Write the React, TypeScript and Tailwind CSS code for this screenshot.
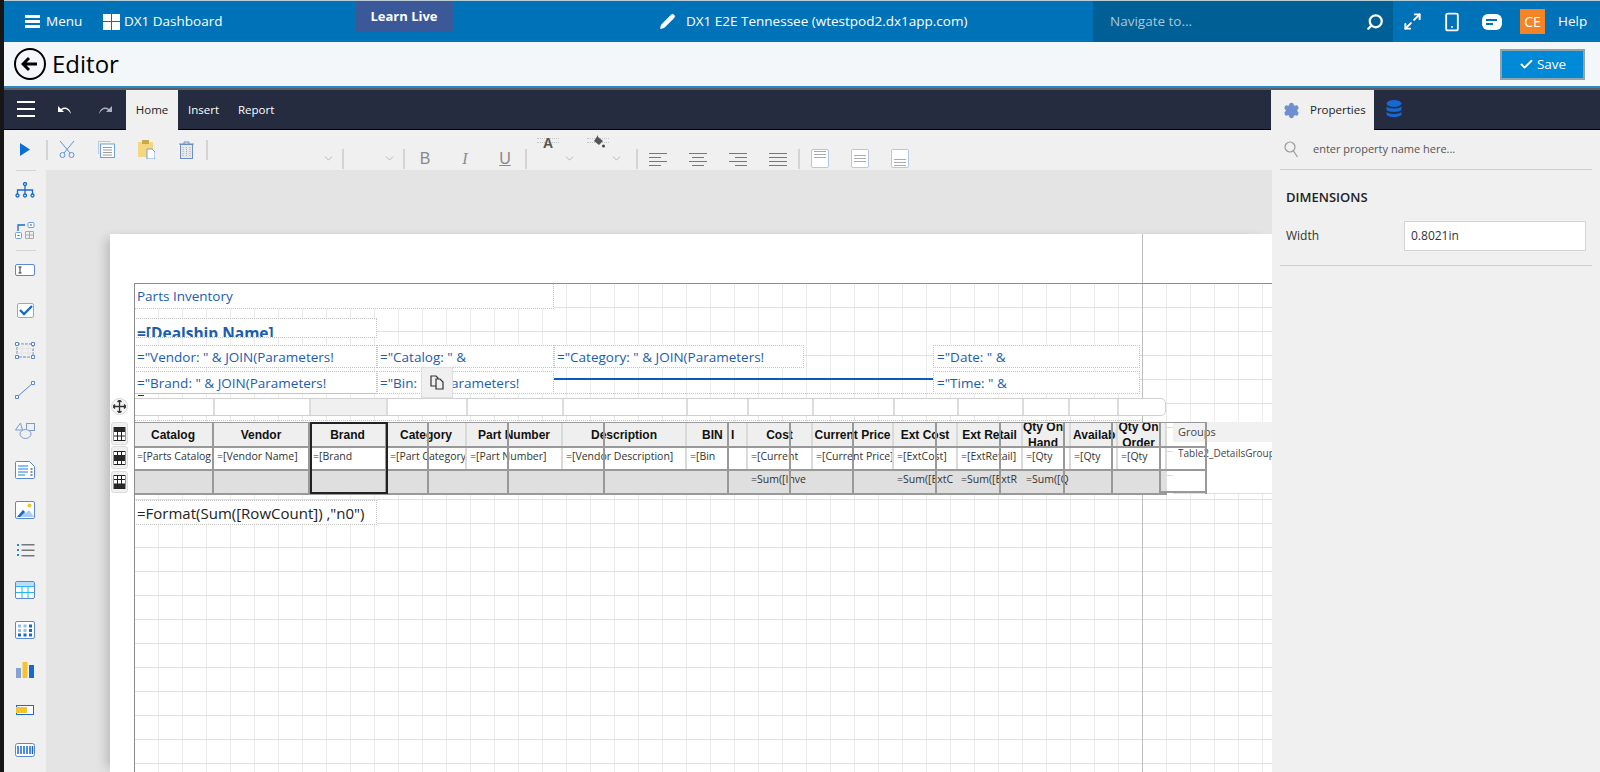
import { Check, Maximize2, Search, Settings, Smartphone, Pencil, ChevronDown } from "lucide-react";

const tableCols = "grid-cols-[80px_96px_77px_80px_96px_124px_42px_19px_65px_81px_64px_65px_42px_6px_47px_43px_6px]";
const lineCols = "grid-cols-[80px_96px_77px_42px_80px_96px_124px_62px_63px_83px_64px_64px_48px_48px]";

const headers: [string, string?][] = [
  ["Catalog"], ["Vendor"], ["Brand"], ["Category"], ["Part Number"], ["Description"], ["BIN"], ["I"], ["Cost"],
  ["Current Price"], ["Ext Cost"], ["Ext Retail"], ["Qty On", "Hand"], [""], ["Available"], ["Qty On", "Order"], [""],
];

const details: string[][] = [
  ["=[Parts Catalog", "Name]"], ["=[Vendor Name]"], ["=[Brand", "Name]"], ["=[Part Category", "Name]"], ["=[Part Number]"],
  ["=[Vendor Description]"], ["=[Bin", "Location]"], ["\u00a0", "=["], ["=[Current", "Price]"], ["=[Current Price]"],
  ["=[ExtCost]"], ["=[ExtRetail]"], ["=[Qty", "On"], [""], ["=[Qty", "Available"], ["=[Qty", "On"], [""],
];

const footers: string[][] = [
  [""], [""], [""], [""], [""], [""], [""], [""], ["=Sum([Inve"], [""], ["=Sum([ExtC"],
  ["=Sum([ExtR"], ["=Sum([Q"], [""], [""], [""], [""],
];

function HeaderBar() {
  return (
    <div className="flex h-[42px] shrink-0 items-center whitespace-nowrap border-t border-[#b9cdd9] bg-[#0072b8] text-[13.5px] text-white">
      <div className="ml-[21px] flex h-[13px] w-[15px] shrink-0 flex-col justify-between">
        <div className="h-[3px] bg-white" />
        <div className="h-[3px] bg-white" />
        <div className="h-[3px] bg-white" />
      </div>
      <span className="ml-[6px] w-[36px] shrink-0">Menu</span>
      <div className="ml-[21px] grid h-[16px] w-[17px] shrink-0 grid-cols-2 gap-[1px]">
        <div className="bg-white" />
        <div className="bg-white" />
        <div className="bg-white" />
        <div className="bg-white" />
      </div>
      <span className="ml-[4px] w-[96px] shrink-0">DX1 Dashboard</span>
      <div className="ml-[135px] flex h-[31px] w-[98px] shrink-0 -translate-y-[5px] items-center justify-center rounded-b-[3px] bg-[#3b5998] text-[13px] font-bold">
        Learn Live
      </div>
      <Pencil size={17} fill="white" strokeWidth={1} className="ml-[206px] shrink-0 -scale-x-100 rotate-90" />
      <span className="ml-[10px] w-[273px] shrink-0">DX1 E2E Tennessee (wtestpod2.dx1app.com)</span>
      <div className="ml-[134px] flex h-full w-[300px] shrink-0 items-center justify-between bg-[#005f94] pl-[17px] pr-[9px] text-[#a9c8dc]">
        <span>Navigate to...</span>
        <Search size={18} strokeWidth={3} className="-scale-x-100 text-white" />
      </div>
      <Maximize2 size={19} strokeWidth={2.5} className="ml-[10px] shrink-0" />
      <Smartphone size={20} strokeWidth={2.2} className="ml-[20px] shrink-0" />
      <div className="ml-[20px] flex h-[16px] w-[20px] shrink-0 flex-col justify-center gap-[2px] rounded-[6px] bg-white pl-[4px]">
        <div className="h-[2px] w-[11px] bg-[#0072b8]" />
        <div className="h-[2px] w-[7px] bg-[#0072b8]" />
      </div>
      <div className="ml-[18px] flex h-[25px] w-[25px] shrink-0 items-center justify-center bg-[#f58426] text-[14px]">CE</div>
      <span className="ml-[13px]">Help</span>
    </div>
  );
}

function EditorBar() {
  return (
    <div className="flex h-[46px] shrink-0 items-center border-b-[2px] border-[#2a8ac4] bg-[#f3f7fa]">
      <div className="ml-[10px] flex h-[32px] w-[32px] items-center justify-center rounded-full border-[2px] border-black">
        <svg width="18" height="16" viewBox="0 0 18 16">
          <path d="M8 2 2 8l6 6M2 8h14" fill="none" stroke="#000" strokeWidth="3" />
        </svg>
      </div>
      <span className="ml-[6px] text-[24px] leading-none text-black">Editor</span>
      <button className="ml-auto mr-[15px] flex h-[31px] w-[85px] items-center justify-center gap-[3px] border-[2px] border-[#8fa3ae] bg-[#0089d6] text-[13.5px] text-white">
        <Check size={15} strokeWidth={3} />
        Save
      </button>
    </div>
  );
}

function TabBar() {
  return (
    <div className="flex h-[42px] shrink-0 items-stretch border-b border-t-[2px] border-b-black border-t-[#5b5f66] bg-[#252c40] text-[11.5px] text-white">
      <div className="ml-[13px] mt-[11px] flex h-[16px] w-[18px] flex-col justify-between">
        <div className="h-[2px] bg-white" />
        <div className="h-[2px] bg-white" />
        <div className="h-[2px] bg-white" />
      </div>
      <svg width="16" height="10" viewBox="0 0 16 10" className="ml-[22px] mt-[15px]">
        <path d="M1 1v6h6L5 5c3-2 6-1 9 4-1-6-6-8-10-5z" fill="#fff" />
      </svg>
      <svg width="16" height="10" viewBox="0 0 16 10" className="ml-[24px] mt-[15px]">
        <path d="M15 1v6H9l2-2C8 3 5 4 2 9c1-6 6-8 10-5z" fill="#aeb2bc" />
      </svg>
      <div className="ml-[13px] -mb-[1px] flex w-[52px] items-center justify-center bg-[#f0f0f0] text-[#222]">Home</div>
      <span className="ml-[10px] flex w-[30px] items-center">Insert</span>
      <span className="ml-[20px] flex items-center">Report</span>
      <div className="ml-auto -mb-[1px] flex w-[103px] items-center bg-[#f0f0f0] text-[#222]">
        <Settings size={17} fill="#6f8fd0" stroke="#6f8fd0" className="ml-[12px]" />
        <span className="ml-[10px]">Properties</span>
      </div>
      <svg width="16" height="18" viewBox="0 0 16 18" className="ml-[12px] mr-[198px] mt-[10px]">
        <ellipse cx="8" cy="3.5" rx="7.5" ry="3.5" fill="#1769d2" />
        <path d="M.5 6.5c2 2.5 13 2.5 15 0v3.5c-2 2.500-13 2.500-15 0zM.5 12c2 2.500 13 2.500 15 0v2.500c-2 3.500-13 3.500-15 0z" fill="#1769d2" />
      </svg>
    </div>
  );
}

function Sep() {
  return <div className="mt-[10px] h-[20px] w-[2px] shrink-0 bg-[#d4d4d4]" />;
}

function LowSep() {
  return <div className="mt-[19px] h-[20px] w-[2px] shrink-0 bg-[#d4d4d4]" />;
}

function Lines({ kind }: { kind: string }) {
  const w = kind === "justify" ? ["w-[18px]", "w-[18px]", "w-[18px]", "w-[18px]"] : ["w-[18px]", "w-[12px]", "w-[18px]", "w-[12px]"];
  const align = kind === "left" ? "items-start" : kind === "right" ? "items-end" : "items-center";
  return (
    <div className="mt-[19px] flex h-[20px] w-10 shrink-0 items-center justify-center">
      <div className={`flex w-[18px] flex-col gap-[3px] ${align}`}>
        {w.map((c, i) => (
          <div key={i} className={`h-[1px] bg-[#777] ${c}`} />
        ))}
      </div>
    </div>
  );
}

function PageLayout({ pos }: { pos: string }) {
  return (
    <div className="mt-[19px] flex h-[20px] w-10 shrink-0 justify-center">
      <div className={`flex h-[19px] w-[18px] flex-col gap-[2px] rounded-[2px] border-[1.5px] border-[#b7c6e4] bg-white px-[2px] py-[1px] ${pos}`}>
        <div className="h-[1px] bg-[#aaa]" />
        <div className="h-[1px] bg-[#aaa]" />
        <div className="h-[1px] bg-[#aaa]" />
      </div>
    </div>
  );
}

function Toolbar() {
  return (
    <div className="flex h-[40px] shrink-0 bg-[#f0f0f0] text-[#8a8a8a]">
      <div className="flex h-10 w-[42px] shrink-0 items-center justify-center">
        <svg width="10" height="13" viewBox="0 0 10 13" className="-mt-[1px]">
          <path d="M0 0l10 6.500L0 13z" fill="#0a6fd8" />
        </svg>
      </div>
      <Sep />
      <div className="flex h-10 w-[38px] shrink-0 items-center justify-center">
        <svg width="16" height="17" viewBox="0 0 16 17" fill="none" stroke="#5b94d8" className="-mt-[1px]">
          <path d="M1 0l10 12M15 0 5 12" />
          <circle cx="3.500" cy="14" r="2.500" />
          <circle cx="12.500" cy="14" r="2.500" />
        </svg>
      </div>
      <div className="flex h-10 w-10 shrink-0 items-center justify-center">
        <svg width="17" height="17" viewBox="0 0 17 17" fill="none" className="-mt-[1px]">
          <path d="M.5 13V.5h12" stroke="#b3c8e6" />
          <rect x="2.500" y="3" width="14" height="13.500" fill="#fff" stroke="#6f9fdc" />
          <path d="M5 6.500h9M5 9h9M5 11.500h9M5 14h9" stroke="#999" />
        </svg>
      </div>
      <div className="flex h-10 w-10 shrink-0 items-center justify-center">
        <svg width="17" height="19" viewBox="0 0 17 19" className="-mt-[1px]">
          <rect x="0" y="2" width="15" height="15" fill="#f5d77f" />
          <rect x="4" y="0" width="7" height="4" fill="#c8a94a" />
          <path d="M9 9h5l3 3v7H9z" fill="#fff" stroke="#6f9fdc" />
        </svg>
      </div>
      <div className="flex h-10 w-10 shrink-0 items-center justify-center">
        <svg width="15" height="18" viewBox="0 0 15 18" fill="none" stroke="#6f8fc0" className="-mt-[1px]">
          <path d="M0 3h15M5 3V1h5v2" />
          <rect x="1.500" y="3.500" width="12" height="14" fill="#e8e8e8" />
          <path d="M4 6v9M7.500 6v9M11 6v9" stroke="#aaa" strokeDasharray="1 1" />
        </svg>
      </div>
      <Sep />
      <div className="flex h-10 w-[134px] shrink-0 items-end justify-end pb-[5px] pr-[7px]">
        <ChevronDown size={13} strokeWidth={1} />
      </div>
      <LowSep />
      <div className="flex h-10 w-[59px] shrink-0 items-end justify-end pb-[5px] pr-[7px]">
        <ChevronDown size={13} strokeWidth={1} />
      </div>
      <LowSep />
      <div className="mt-[19px] flex h-[20px] w-10 shrink-0 items-center justify-center text-[16px] leading-none [font-family:'Liberation_Sans',sans-serif]">B</div>
      <div className="mt-[19px] flex h-[20px] w-10 shrink-0 items-center justify-center text-[16px] italic leading-none [font-family:'Liberation_Serif',serif]">I</div>
      <div className="mt-[19px] flex h-[20px] w-10 shrink-0 items-center justify-center text-[16px] leading-none underline [font-family:'Liberation_Sans',sans-serif]">U</div>
      <LowSep />
      <div className="flex w-[109px] shrink-0">
        <div className="relative ml-[10px] mt-[5px] h-[16px] w-[22px]">
          <div className="absolute left-0 top-[3px] h-[5px] w-[22px] border-y border-dotted border-[#c4c4c4]" />
          <span className="absolute left-[6px] top-0 text-[14px] font-bold leading-[16px] text-[#555] [font-family:'Liberation_Sans',sans-serif]">A</span>
        </div>
        <ChevronDown size={13} strokeWidth={1} className="ml-[4px] mt-[22px]" />
        <div className="relative ml-[11px] mt-[5px] h-[16px] w-[22px]">
          <div className="absolute left-0 top-[3px] h-[5px] w-[22px] border-y border-dotted border-[#c4c4c4]" />
          <svg width="14" height="14" viewBox="0 0 14 14" className="absolute left-[5px] top-0">
            <path d="M6 0v2l5 4-4 4-5-4z" fill="#555" />
            <circle cx="11.500" cy="11" r="1.500" fill="#444" />
          </svg>
        </div>
        <ChevronDown size={13} strokeWidth={1} className="ml-[1px] mt-[22px]" />
      </div>
      <LowSep />
      <Lines kind="left" />
      <Lines kind="center" />
      <Lines kind="right" />
      <Lines kind="justify" />
      <LowSep />
      <PageLayout pos="justify-start" />
      <PageLayout pos="justify-center" />
      <PageLayout pos="justify-end" />
    </div>
  );
}

const sideIcons = [
  <svg key="a" width="20" height="16" viewBox="0 0 20 16" fill="none" stroke="#1769d2" strokeWidth="1.300">
    <circle cx="10" cy="2" r="1.500" /><circle cx="2.500" cy="13.500" r="1.500" /><circle cx="10" cy="13.500" r="1.500" /><circle cx="17.500" cy="13.500" r="1.500" />
    <path d="M10 3.500V12M2.500 12V8h15v4" />
  </svg>,
  <svg key="b" width="20" height="17" viewBox="0 0 20 17" fill="none">
    <rect x="13" y="0.500" width="6" height="5" rx="1" stroke="#6f9fdc" fill="#fff" /><rect x="15" y="2.500" width="2" height="1" fill="#1769d2" />
    <rect x="0.500" y="10.500" width="6" height="6" rx="1" stroke="#6f9fdc" fill="#fff" /><rect x="2.500" y="13" width="2" height="1" fill="#1769d2" />
    <path d="M3 9V3h7" stroke="#1769d2" strokeWidth="1.300" />
    <path d="M10.500 9.500h8v7h-8zM14.500 9.500v7M10.500 13h8" stroke="#aaa" />
  </svg>,
  <svg key="c" width="20" height="12" viewBox="0 0 20 12" fill="none">
    <rect x="0.500" y="0.500" width="19" height="11" rx="1.500" fill="#fff" stroke="#5b86d0" />
    <path d="M3.500 3h3M3.500 9h3M5 3v6" stroke="#333" />
  </svg>,
  <svg key="d" width="17" height="15" viewBox="0 0 17 15" fill="none">
    <rect x="0.500" y="0.500" width="16" height="14" rx="1.500" fill="#fff" stroke="#8aa9dc" />
    <path d="M3 7l4 4 8-8" stroke="#1769d2" strokeWidth="2.400" />
  </svg>,
  <svg key="e" width="20" height="17" viewBox="0 0 20 17" fill="none">
    <path d="M2 2h16v13H2z" stroke="#5b86d0" strokeDasharray="3 1" />
    <path d="M2 6.500h16M2 11h16M7 2v13M13 2v13" stroke="#e4e4e4" />
    <path d="M0.500 0.500h3v3h-3zM16.500 0.500h3v3h-3zM0.500 13.500h3v3h-3zM16.500 13.500h3v3h-3z" stroke="#5b86d0" fill="#fff" />
  </svg>,
  <svg key="f" width="20" height="18" viewBox="0 0 20 18" fill="none" stroke="#5b86d0">
    <path d="M2 16 18 2" />
    <path d="M.5 14.500h3v3h-3zM16.500.5h3v3h-3z" fill="#fff" />
  </svg>,
  <svg key="g" width="20" height="17" viewBox="0 0 20 17" fill="none" stroke="#7f9ad0">
    <path d="M5.500 1 .5 8h7z" /><rect x="11.500" y="1.500" width="8" height="7" />
    <ellipse cx="10.500" cy="12" rx="5.500" ry="4.500" fill="#f0f0f0" />
  </svg>,
  <svg key="h" width="20" height="18" viewBox="0 0 20 18" fill="none">
    <path d="M1.500.5h13l5 5v11a1 1 0 0 1-1 1h-17a1 1 0 0 1-1-1v-15a1 1 0 0 1 1-1z" fill="#fff" stroke="#5b86d0" />
    <path d="M3 5h10M3 8h10M3 11h10M3 14h7" stroke="#6aa9ea" strokeWidth="1.500" />
    <path d="M15.500 8h2M15.500 11h2M15.500 14h2" stroke="#666" strokeWidth="1.500" />
  </svg>,
  <svg key="i" width="20" height="18" viewBox="0 0 20 18">
    <rect x="0.500" y="0.500" width="19" height="17" rx="1.500" fill="#fff" stroke="#5b86d0" />
    <circle cx="14.500" cy="4.500" r="2" fill="#f4c430" />
    <path d="M2 16l6-7 3 3 3-3 5 7z" fill="#a9cdf0" />
    <path d="M2 16l6-7 2 2-5 5z" fill="#1769d2" />
  </svg>,
  <svg key="j" width="19" height="15" viewBox="0 0 19 15">
    <path d="M1 1h2v2H1zM1 6h2v2H1zM1 11h2v2H1z" fill="#1e88e5" />
    <path d="M5.500 1h13v1.500h-13zM5.500 6.500h13V8h-13zM5.500 12h13v1.500h-13z" fill="#777" />
  </svg>,
  <svg key="k" width="20" height="18" viewBox="0 0 20 18" fill="none">
    <rect x="0.500" y="0.500" width="19" height="17" rx="1.500" fill="#fff" stroke="#5b86d0" />
    <path d="M1 1h18v4H1z" fill="#bcdcf5" />
    <path d="M1 5.500h18M1 11.500h18M7 5.500v12M13 5.500v12" stroke="#29b6f6" />
  </svg>,
  <svg key="l" width="20" height="18" viewBox="0 0 20 18">
    <rect x="0.500" y="0.500" width="19" height="17" rx="1.500" fill="#fff" stroke="#5b86d0" />
    <path d="M3 3.500h3v3H3zM8.500 3.500h3v3h-3zM3 8h3v3H3zM8.500 8h3v3h-3z" fill="#90c2f0" />
    <path d="M14 3.500h3v3h-3zM14 8h3v3h-3zM3 12.500h3v3H3zM8.500 12.500h3v3h-3zM14 12.500h3v3h-3z" fill="#1769d2" />
  </svg>,
  <svg key="m" width="18" height="16" viewBox="0 0 18 16">
    <rect x="0" y="6" width="5" height="10" fill="#85a2d4" />
    <rect x="6.500" y="0" width="5" height="16" fill="#f4c430" />
    <rect x="13" y="3" width="5" height="13" fill="#1769d2" />
  </svg>,
  <svg key="n" width="18" height="10" viewBox="0 0 18 10" fill="none">
    <rect x="0.500" y="0.500" width="17" height="9" stroke="#1769d2" fill="#fff" />
    <rect x="0" y="2" width="11" height="6" fill="#f4c430" />
  </svg>,
  <svg key="o" width="20" height="14" viewBox="0 0 20 14" fill="none">
    <rect x="0.500" y="0.500" width="19" height="13" rx="2" fill="#fff" stroke="#5b86d0" />
    <path d="M3 3v8M6 3v8M9 3v8M12 3v8M15 3v8M17.500 3v8" stroke="#1769d2" strokeWidth="1.500" />
  </svg>,
];

function Sidebar() {
  return (
    <div className="flex w-[42px] shrink-0 flex-col items-center bg-[#f0f0f0]">
      {sideIcons.map((icon, i) => (
        <div key={i} className="relative flex h-10 w-full shrink-0 items-center justify-center">
          {(i === 0 || i === 2) && <div className="absolute left-[12px] top-0 h-[1px] w-[20px] bg-[#d4d4d4]" />}
          {icon}
        </div>
      ))}
    </div>
  );
}

function Box({ pos, children, cls = "text-[13.5px] text-[#1a5cb0]" }: { pos: string; children: React.ReactNode; cls?: string }) {
  return (
    <div className={`absolute overflow-hidden whitespace-nowrap border border-dotted border-[#c4c4c4] bg-white pl-[2px] ${pos} ${cls}`}>
      {children}
    </div>
  );
}

function TableHandle({ row }: { row: number }) {
  return (
    <div className="flex h-full w-full items-center justify-center rounded-[3px] border border-[#dcdcdc] bg-[#f0f0f0]">
      <svg width="13" height="14" viewBox="0 0 13 14">
        <rect x="0" y="0" width="13" height="14" fill="#c98a2b" />
        <rect x="1" y="0" width="11" height="14" fill="#fff" />
        {row === 0 && <rect x="1" y="0" width="11" height="5" fill="#2a2a2a" />}
        {row === 1 && <rect x="1" y="4" width="11" height="6" fill="#2a2a2a" />}
        {row === 2 && <rect x="1" y="9" width="11" height="5" fill="#2a2a2a" />}
        <path d="M1 .5h11M1 4.500h11M1 9h11M1 13.500h11M4.500 0v14M8.500 0v14" stroke="#222" />
      </svg>
    </div>
  );
}

function Cell({ lines, cls }: { lines: string[]; cls: string }) {
  return (
    <div className={`overflow-hidden whitespace-nowrap ${cls}`}>
      {lines.map((l, i) => (
        <div key={i}>{l}</div>
      ))}
    </div>
  );
}

function headerCellAlign(i: number) {
  if (i === 6) return "items-start pl-[15px]";
  if (i === 7) return "items-start pl-[2px]";
  if (i === 14) return "items-start pl-[2px]";
  return "items-center";
}

function ReportTable() {
  return (
    <div className="absolute left-0 top-[139px] w-[1033px]">
      {/* header */}
      <div className={`grid h-[26px] border-b-[2px] border-t border-[#999] bg-[#efefef] [font-family:'Liberation_Sans',sans-serif] text-[12px] font-bold leading-[16px] text-[#111] ${tableCols}`}>
        {headers.map((h, i) => (
          <div key={i} className={`flex flex-col justify-center overflow-hidden whitespace-nowrap border-r-[2px] border-[#dadada] ${headerCellAlign(i)}`}>
            <div>{h[0]}</div>
            {h[1] && <div>{h[1]}</div>}
          </div>
        ))}
      </div>
      {/* detail */}
      <div className={`grid h-[23px] border-b-[2px] border-[#999] bg-white text-[10.500px] leading-[17px] text-[#333] ${tableCols}`}>
        {details.map((d, i) => (
          <Cell key={i} lines={d} cls="border-r-[2px] border-[#dadada] pl-[3px]" />
        ))}
      </div>
      {/* footer */}
      <div className={`grid h-[24px] border-b-[2px] border-[#999] bg-[#dfdfdf] text-[10.500px] leading-[15px] text-[#333] ${tableCols}`}>
        {footers.map((d, i) => (
          <div key={i} className="overflow-visible whitespace-nowrap pl-[3px] pt-[1px]">
            {d[0]}
          </div>
        ))}
      </div>
      {/* column lines from the overlapping table */}
      <div className={`absolute inset-0 grid ${lineCols}`}>
        {Array.from({ length: 14 }).map((_, i) => (
          <div key={i} className="border-r-[2px] border-[#999]" />
        ))}
      </div>
      {/* selected column */}
      <div className="absolute left-[176px] top-0 h-[72px] w-[78px] border-[2px] border-[#222]" />
    </div>
  );
}

function GroupsPanel() {
  return (
    <div className="absolute left-[1039px] top-[139px] h-[72px] w-[99px] border-b border-[#ddd] bg-white">
      <div className="flex h-[20px] items-center bg-[#f1f1f1] pl-[5px] text-[11px] text-[#444]">Groups</div>
      <div className="overflow-hidden whitespace-nowrap pl-[5px] pt-[3px] text-[10px] leading-[16px] text-[#444]">Table2_DetailsGroup1</div>
      <div className="absolute left-[-12px] top-0 h-[72px] w-[46px] border-r-[2px] border-t-[1px] border-[#999]" />
      <div className="absolute left-[-12px] top-[24px] h-[25px] w-[46px] border-b-[2px] border-t-[2px] border-[#999]" />
      <div className="absolute bottom-0 left-[-12px] h-[2px] w-[46px] bg-[#999]" />
    </div>
  );
}

function Canvas() {
  return (
    <div className="flex-1 overflow-hidden bg-[#e4e4e4] pl-[64px] pt-[64px]">
      <div className="relative h-full bg-white pl-[24px] pt-[49px] shadow-[-8px_0_10px_-4px_rgba(0,0,0,0.18)]">
        <div className="relative h-[600px] bg-[linear-gradient(#e0e0e0_1px,transparent_1px),linear-gradient(90deg,#ebebeb_1px,transparent_1px)] bg-[size:24px_24px]">
          {/* surface edges */}
          <div className="absolute left-0 right-0 top-0 z-10 h-[1px] bg-[#8c8c8c]" />
          <div className="absolute bottom-0 left-0 top-0 z-10 w-[1px] bg-[#8c8c8c]" />
          {/* page width marker */}
          <div className="absolute bottom-0 left-[1008px] top-[-49px] w-[1px] bg-[#bdbdbd]" />

          <Box pos="left-0 top-0 h-[26px] w-[420px] leading-[24px]">Parts Inventory</Box>
          <Box pos="left-0 top-[35px] h-[20px] w-[243px] pt-[4px] text-[15.500px] font-bold leading-[20px] text-[#1a5cb0]" cls="">
            =[Dealship Name]
          </Box>
          <Box pos="left-0 top-[62px] h-[23px] w-[243px] leading-[22px]">="Vendor: " &amp; JOIN(Parameters!</Box>
          <Box pos="left-[243px] top-[62px] h-[23px] w-[177px] leading-[22px]">="Catalog: " &amp;</Box>
          <Box pos="left-[420px] top-[62px] h-[23px] w-[250px] leading-[22px]">="Category: " &amp; JOIN(Parameters!</Box>
          <Box pos="left-[799px] top-[62px] h-[23px] w-[207px] pl-[3px] leading-[22px]">="Date: " &amp;</Box>
          <Box pos="left-0 top-[88px] h-[23px] w-[243px] leading-[22px]">="Brand: " &amp; JOIN(Parameters!</Box>
          <Box pos="left-[243px] top-[88px] h-[23px] w-[177px] leading-[22px]">="Bin: " &amp; Parameters!</Box>
          <Box pos="left-[799px] top-[88px] h-[23px] w-[207px] pl-[3px] leading-[22px]">="Time: " &amp;</Box>
          <div className="absolute left-[420px] top-[95px] h-[2px] w-[379px] bg-[#0a5cb8]" />
          <div className="absolute left-[4px] top-[112px] h-[1px] w-[6px] bg-[#333]" />
          <div className="absolute left-0 top-[110px] h-[1px] w-[1006px] border-t border-dotted border-[#c4c4c4]" />

          {/* copy button */}
          <div className="absolute left-[287px] top-[84px] flex h-[31px] w-[32px] items-center justify-center border border-[#dedede] bg-[#f0f0f0]">
            <svg width="14" height="15" viewBox="0 0 14 15" fill="none" stroke="#333" strokeWidth="1.200">
              <path d="M1 1h5l2 2v8H1z" fill="#f0f0f0" />
              <path d="M6 4h4l3 3v7H6z" fill="#f0f0f0" />
            </svg>
          </div>

          {/* column handles */}
          <div className="absolute left-0 top-[115px] grid h-[18px] w-[1032px] grid-cols-[80px_96px_77px_80px_96px_124px_61px_65px_81px_64px_65px_46px_49px_48px] rounded-r-[5px] border border-[#d0d0d0] bg-white">
            {Array.from({ length: 14 }).map((_, i) => (
              <div key={i} className={`border-r-[2px] border-[#dcdcdc] last:border-r-0 ${i === 2 ? "bg-[#f0f0f0]" : ""}`} />
            ))}
          </div>
          <div className="absolute left-0 top-[137px] h-[1px] w-[1006px] border-t border-dotted border-[#c4c4c4]" />

          <ReportTable />
          <GroupsPanel />

          {/* table selectors */}
          <div className="absolute left-[-7px] top-[115px] flex h-[17px] w-[17px] -translate-x-[16px] items-center justify-center rounded-full border border-[#d8d8d8] bg-[#f4f4f4]">
            <svg width="13" height="13" viewBox="0 0 13 13" fill="none" stroke="#333" strokeWidth="1.300">
              <path d="M6.500 0v13M0 6.500h13M4.500 2l2-2 2 2M4.500 11l2 2 2-2M2 4.500l-2 2 2 2M11 4.500l2 2-2 2" />
            </svg>
          </div>
          <div className="absolute left-[-23px] top-[139px] h-[23px] w-[17px]"><TableHandle row={0} /></div>
          <div className="absolute left-[-23px] top-[163px] h-[23px] w-[17px]"><TableHandle row={1} /></div>
          <div className="absolute left-[-23px] top-[188px] h-[22px] w-[17px]"><TableHandle row={2} /></div>

          <Box pos="left-0 top-[217px] h-[25px] w-[243px] leading-[24px]" cls="text-[15px] text-[#222]">
            =Format(Sum([RowCount]) ,"n0")
          </Box>
        </div>
      </div>
    </div>
  );
}

function PropertiesPanel() {
  return (
    <div className="h-full w-[328px] shrink-0 bg-[#f0f0f0] text-[#333]">
      <div className="mx-[8px] flex h-[40px] items-center border-b border-[#cfcfcf] pl-[4px]">
        <svg width="15" height="17" viewBox="0 0 15 17" fill="none" stroke="#999" strokeWidth="1.200">
          <circle cx="6" cy="6" r="5" />
          <path d="M9.500 10l4 6" />
        </svg>
        <span className="ml-[14px] text-[11px] text-[#555]">enter property name here...</span>
      </div>
      <div className="mx-[8px] h-[96px] border-b border-[#cfcfcf] pl-[6px]">
        <div className="pt-[17px] text-[13px] font-semibold leading-[20px] text-[#222]">DIMENSIONS</div>
        <div className="mt-[14px] flex items-center">
          <span className="w-[118px] text-[12px]">Width</span>
          <div className="flex h-[30px] w-[182px] items-center border border-[#d4d4d4] bg-white pl-[6px] text-[12px]">0.8021in</div>
        </div>
      </div>
    </div>
  );
}

export default function App() {
  return (
    <div className="flex h-screen w-full flex-col overflow-hidden border-l-4 border-[#161616] [font-family:'Open_Sans',sans-serif]">
      <HeaderBar />
      <EditorBar />
      <TabBar />
      <div className="flex min-h-0 flex-1">
        <div className="flex min-w-0 flex-1 flex-col">
          <Toolbar />
          <div className="flex min-h-0 flex-1">
            <Sidebar />
            <Canvas />
          </div>
        </div>
        <PropertiesPanel />
      </div>
    </div>
  );
}
